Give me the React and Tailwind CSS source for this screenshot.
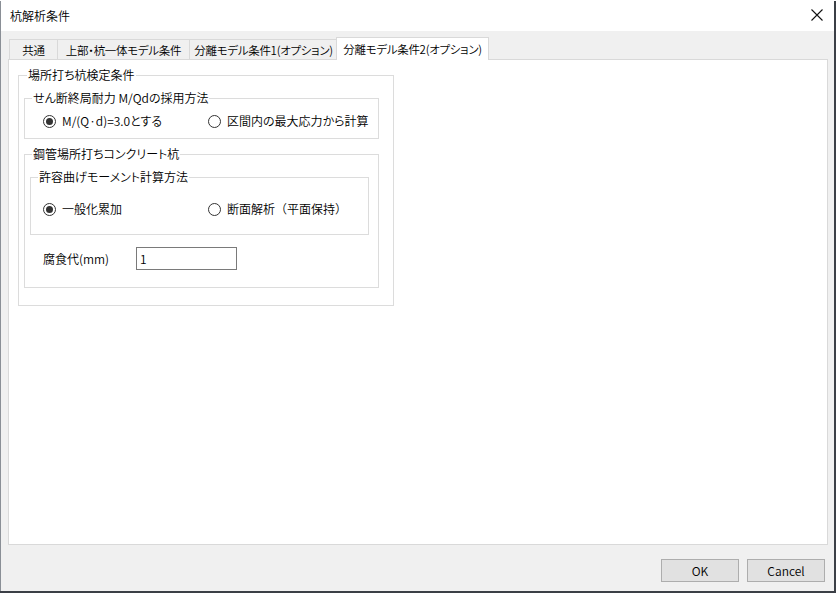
import React from "react";

const font = {
  fontFamily: '"Noto Sans CJK JP", "Noto Sans", sans-serif',
};

function Radio({ checked, label, width, normal }) {
  return (
    <div className={`flex items-center h-[16px] ${width || ""}`}>
      <span className="w-[13px] h-[13px] rounded-full border border-[#333333] bg-white flex items-center justify-center shrink-0">
        {checked ? <span className="w-[7px] h-[7px] rounded-full bg-[#333333]" /> : null}
      </span>
      <span className={`ml-[6px] whitespace-nowrap ${normal ? "[font-feature-settings:normal]" : ""}`}>{label}</span>
    </div>
  );
}

function Legend({ children, ml }) {
  return (
    <div className={`-mt-[9px] h-[16px] leading-[16px] w-fit bg-white px-[1px] whitespace-nowrap ${ml}`}>
      {children}
    </div>
  );
}

export default function App() {
  return (
    <div
      className="w-[836px] h-[593px] bg-[#3b3f46] text-[12px] font-[350] text-black [font-feature-settings:'palt']"
      style={font}
    >
      <div className="w-[834px] h-[590px] mt-[1px] bg-[#f0f0f0] flex flex-col border-l border-[#8a8f96]">
        {/* title bar */}
        <div className="h-[30px] bg-white flex items-center justify-between pl-[9px] pr-[10px]">
          <span className="leading-[16px] -mt-[1px]">杭解析条件</span>
          <svg width="12" height="12" viewBox="0 0 12 12" className="mr-[1px] -mt-[2px]">
            <path d="M0.5 0.5 L11.5 11.5 M11.5 0.5 L0.5 11.5" stroke="#111" strokeWidth="1.1" />
          </svg>
        </div>

        {/* tabs */}
        <div className="pt-[6px] pl-[7px] text-[11.5px] tracking-[-0.3px]">
          <div className="flex items-end h-[22px] pl-[1px]">
            <div className="w-[49px] h-[20px] border border-b-0 border-[#d9d9d9] bg-[#f0f0f0] flex items-center justify-center leading-[16px] whitespace-nowrap">
              共通
            </div>
            <div className="-ml-[1px] w-[133px] h-[20px] border border-b-0 border-[#d9d9d9] bg-[#f0f0f0] flex items-center justify-center leading-[16px] whitespace-nowrap">
              上部・杭一体モデル条件
            </div>
            <div className="-ml-[1px] w-[149px] h-[20px] border border-b-0 border-[#d9d9d9] bg-[#f0f0f0] flex items-center justify-center leading-[16px] whitespace-nowrap">
              分離モデル条件1(オプション)
            </div>
            <div className="-ml-[2px] w-[153px] h-[23px] -mb-[1px] relative z-10 border border-b-0 border-[#d9d9d9] bg-white flex items-center justify-center leading-[16px] whitespace-nowrap pb-[1px]">
              分離モデル条件2(オプション)
            </div>
          </div>
        </div>

        {/* panel */}
        <div className="mx-[7px] w-[820px] h-[486px] border border-[#d9d9d9] bg-white">
          {/* outer group */}
          <div className="ml-[9px] mt-[15px] w-[376px] h-[231px] border border-[#dcdcdc] flex flex-col">
            <Legend ml="ml-[8px]">場所打ち杭検定条件</Legend>

            {/* group 1 */}
            <div className="ml-[5px] mt-[15px] w-[355px] h-[41px] border border-[#dcdcdc] flex flex-col">
              <Legend ml="ml-[7px]">せん断終局耐力 M/Qdの採用方法</Legend>
              <div className="mt-[7px] pl-[18px] flex">
                <Radio checked label="M/(Q·d)=3.0とする" width="w-[165px]" />
                <Radio label="区間内の最大応力から計算" />
              </div>
            </div>

            {/* group 2 */}
            <div className="ml-[5px] mt-[15px] w-[355px] h-[134px] border border-[#dcdcdc] flex flex-col">
              <Legend ml="ml-[7px]">鋼管場所打ちコンクリート杭</Legend>

              <div className="ml-[5px] mt-[15px] w-[339px] h-[58px] border border-[#dcdcdc] flex flex-col">
                <Legend ml="ml-[7px]">許容曲げモーメント計算方法</Legend>
                <div className="mt-[16px] pl-[12px] flex">
                  <Radio checked label="一般化累加" width="w-[165px]" />
                  <Radio label="断面解析（平面保持）" normal />
                </div>
              </div>

              <div className="mt-[12px] pl-[18px] flex items-center h-[23px]">
                <span className="w-[93px] leading-[16px]">腐食代(mm)</span>
                <div className="w-[101px] h-[23px] border border-[#7a7a7a] bg-white flex items-center pl-[3px] leading-[16px]">
                  1
                </div>
              </div>
            </div>
          </div>
        </div>

        {/* buttons */}
        <div className="mt-[14px] flex justify-end gap-[8px] pr-[9px]">
          <button className="w-[78px] h-[23px] bg-[#e1e1e1] border border-[#adadad] leading-[16px] font-[350]" style={font}>
            OK
          </button>
          <button className="w-[78px] h-[23px] bg-[#e1e1e1] border border-[#adadad] leading-[16px] font-[350]" style={font}>
            Cancel
          </button>
        </div>
      </div>
    </div>
  );
}
